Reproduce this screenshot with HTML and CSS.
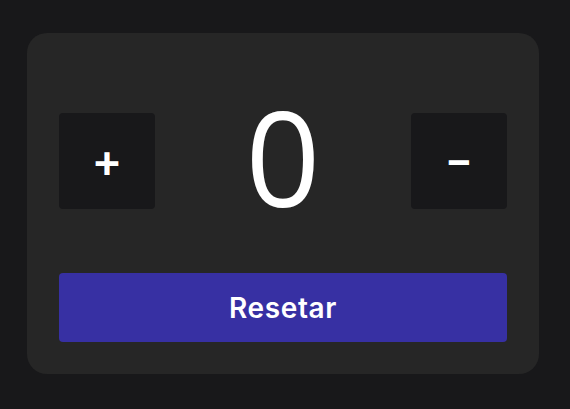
FILE: index.html
```html
<!DOCTYPE html>
<html lang="pt">
<head>
<meta charset="utf-8">
<title>Contador</title>
<link rel="stylesheet" href="styles.css">
</head>
<body>
<main class="card">
  <div class="row">
    <button class="step">+</button>
    <span class="count">0</span>
    <button class="step minus">−</button>
  </div>
  <button class="reset">Resetar</button>
</main>
</body>
</html>
```
FILE: styles.css
```css
html, body {
  margin: 0;
  padding: 0;
  background: #18181a;
  height: 100%;
}
body {
  padding: 33px 0 0 27px;
  box-sizing: border-box;
}
.card {
  width: 512px;
  box-sizing: border-box;
  padding: 32px;
  background: #262626;
  border-radius: 20px;
  display: flex;
  flex-direction: column;
  gap: 16px;
}
.row {
  display: flex;
  align-items: center;
  justify-content: space-between;
  height: 192px;
}
.step {
  width: 96px;
  height: 96px;
  border: 0;
  border-radius: 4px;
  background: #18181a;
  color: #ffffff;
  font-family: "Inter", sans-serif;
  font-weight: 600;
  font-size: 46px;
  line-height: 1;
  padding: 0 0 2px;
  display: flex;
  align-items: center;
  justify-content: center;
}
.minus {
  font-size: 42px;
}
.count {
  font-family: "Open Sans", sans-serif;
  font-weight: 400;
  font-size: 131px;
  line-height: 182px;
  padding-bottom: 10px;
  color: #ffffff;
}
.reset {
  height: 69px;
  border: 0;
  border-radius: 4px;
  background: #3730a3;
  color: #ffffff;
  font-family: "Inter", sans-serif;
  font-weight: 600;
  font-size: 28px;
  letter-spacing: 0.6px;
  padding: 0;
}
```
